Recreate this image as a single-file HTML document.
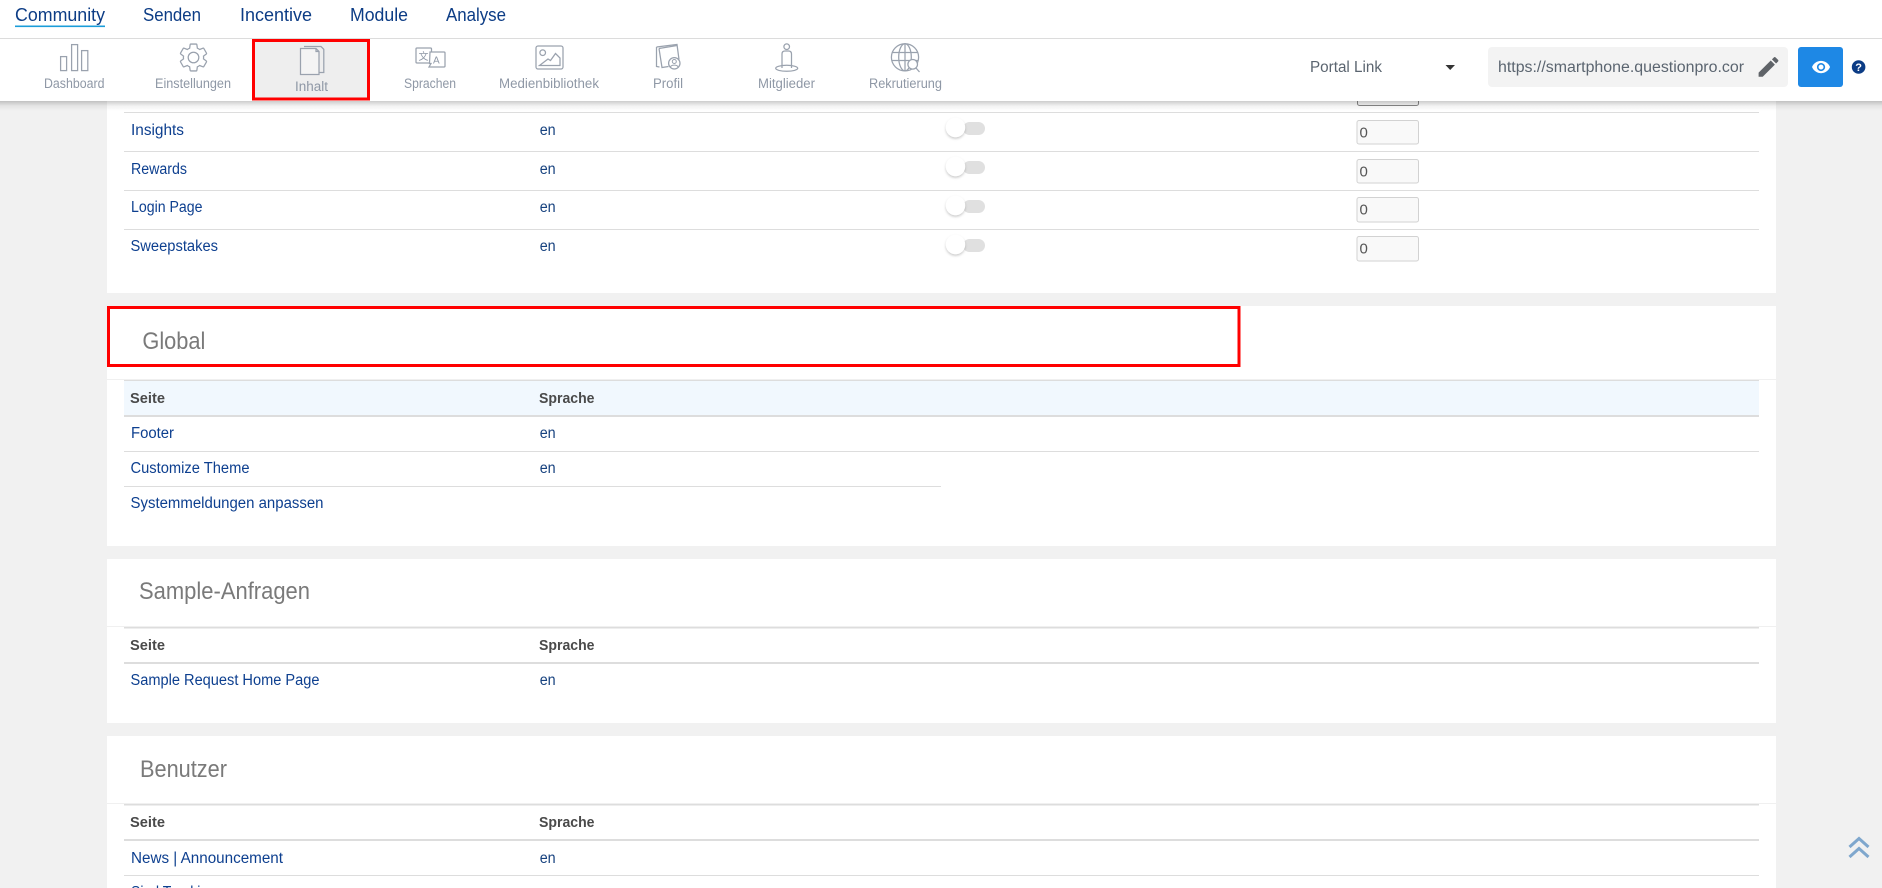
<!DOCTYPE html>
<html lang="de">
<head>
<meta charset="utf-8">
<title>Inhalt</title>
<style>
html,body{margin:0;padding:0;background:#f1f1f1;width:1882px;height:888px;overflow:hidden}
svg{display:block}
text{font-family:"Liberation Sans","Noto Sans CJK SC",sans-serif}
.nav{font-size:18.5px;fill:#0c3c85}
.tb{font-size:13.5px;fill:#8f98a6}
.lk{font-size:15.5px;fill:#0d3f8f}
.en{font-size:15.5px;fill:#17427f}
.th{font-size:15px;font-weight:bold;fill:#4a4a4a}
.h{font-size:24px;fill:#7a7a7a}
.z{font-size:15px;fill:#555}
.ic{fill:none;stroke:#9aa2ae;stroke-width:1.25}
.ln{fill:#dddddd}
</style>
</head>
<body>
<svg xmlns="http://www.w3.org/2000/svg" width="1882" height="888" viewBox="0 0 1882 888">
<defs>
<linearGradient id="sh" x1="0" y1="0" x2="0" y2="1"><stop offset="0" stop-color="#000" stop-opacity=".2"/><stop offset=".5" stop-color="#000" stop-opacity=".05"/><stop offset="1" stop-color="#000" stop-opacity="0"/></linearGradient>
<filter id="ks" x="-50%" y="-50%" width="200%" height="200%"><feDropShadow dx="0" dy="1.5" stdDeviation="1.2" flood-color="#000" flood-opacity=".22"/></filter>
<g id="sw"><rect x="963" y="0" width="22" height="13" rx="6.5" fill="#e0e0e0"/><circle cx="955.5" cy="5.5" r="9.7" fill="#fff" filter="url(#ks)"/></g>
</defs>

<rect width="1882" height="888" fill="#f1f1f1"/>

<!-- Card 1 -->
<rect x="107" y="90" width="1669" height="203" fill="#fff"/>
<rect x="1357.5" y="90.5" width="61" height="15" rx="2" fill="#f9f9f9" stroke="#888"/>
<rect class="ln" x="124" y="112" width="1635" height="1"/>
<rect class="ln" x="124" y="151" width="1635" height="1"/>
<rect class="ln" x="124" y="190" width="1635" height="1"/>
<rect class="ln" x="124" y="229" width="1635" height="1"/>

<text class="lk" x="131" y="135" textLength="53" lengthAdjust="spacingAndGlyphs">Insights</text>
<text class="lk" x="131" y="174" textLength="56" lengthAdjust="spacingAndGlyphs">Rewards</text>
<text class="lk" x="131" y="212" textLength="71.5" lengthAdjust="spacingAndGlyphs">Login Page</text>
<text class="lk" x="130.5" y="251" textLength="87.5" lengthAdjust="spacingAndGlyphs">Sweepstakes</text>
<text class="en" x="539.7" y="135" textLength="16" lengthAdjust="spacingAndGlyphs">en</text>
<text class="en" x="539.7" y="174" textLength="16" lengthAdjust="spacingAndGlyphs">en</text>
<text class="en" x="539.7" y="212" textLength="16" lengthAdjust="spacingAndGlyphs">en</text>
<text class="en" x="539.7" y="251" textLength="16" lengthAdjust="spacingAndGlyphs">en</text>

<use href="#sw" y="122"/>
<use href="#sw" y="161"/>
<use href="#sw" y="200"/>
<use href="#sw" y="239"/>

<rect x="1357" y="120.5" width="61.5" height="23.5" rx="2" fill="#f9f9f9" stroke="#d2d2d2"/>
<rect x="1357" y="159.5" width="61.5" height="23.5" rx="2" fill="#f9f9f9" stroke="#d2d2d2"/>
<rect x="1357" y="197.5" width="61.5" height="24.5" rx="2" fill="#f9f9f9" stroke="#d2d2d2"/>
<rect x="1357" y="236.5" width="61.5" height="24.5" rx="2" fill="#f9f9f9" stroke="#d2d2d2"/>
<text class="z" x="1359.5" y="137.5">0</text>
<text class="z" x="1359.5" y="176.5">0</text>
<text class="z" x="1359.5" y="214.5">0</text>
<text class="z" x="1359.5" y="253.5">0</text>

<!-- Card 2: Global -->
<rect x="107" y="306" width="1669" height="240" fill="#fff"/>
<rect x="107" y="379" width="1669" height="1" fill="#f0f0f0"/>
<rect x="124" y="381" width="1635" height="34" fill="#f1f8fe"/>
<rect class="ln" x="124" y="380" width="1635" height="1"/>
<rect class="ln" x="124" y="415" width="1635" height="2"/>
<rect class="ln" x="124" y="451" width="1635" height="1"/>
<rect class="ln" x="124" y="486" width="817" height="1"/>
<rect x="108.5" y="307.5" width="1130.5" height="58" fill="none" stroke="#f00" stroke-width="3"/>
<text class="h" x="142.4" y="349" textLength="63" lengthAdjust="spacingAndGlyphs">Global</text>
<text class="th" x="130" y="403" textLength="35" lengthAdjust="spacingAndGlyphs">Seite</text>
<text class="th" x="539" y="403" textLength="55.5" lengthAdjust="spacingAndGlyphs">Sprache</text>
<text class="lk" x="131" y="438" textLength="43" lengthAdjust="spacingAndGlyphs">Footer</text>
<text class="en" x="539.7" y="438" textLength="16" lengthAdjust="spacingAndGlyphs">en</text>
<text class="lk" x="130.5" y="473" textLength="119" lengthAdjust="spacingAndGlyphs">Customize Theme</text>
<text class="en" x="539.7" y="473" textLength="16" lengthAdjust="spacingAndGlyphs">en</text>
<text class="lk" x="130.5" y="508" textLength="193" lengthAdjust="spacingAndGlyphs">Systemmeldungen anpassen</text>

<!-- Card 3: Sample-Anfragen -->
<rect x="107" y="559" width="1669" height="164" fill="#fff"/>
<rect x="107" y="626" width="1669" height="1" fill="#f0f0f0"/>
<rect class="ln" x="124" y="627" width="1635" height="1.5"/>
<rect class="ln" x="124" y="662" width="1635" height="2"/>
<text class="h" x="139" y="599" textLength="171" lengthAdjust="spacingAndGlyphs">Sample-Anfragen</text>
<text class="th" x="130" y="650" textLength="35" lengthAdjust="spacingAndGlyphs">Seite</text>
<text class="th" x="539" y="650" textLength="55.5" lengthAdjust="spacingAndGlyphs">Sprache</text>
<text class="lk" x="130.5" y="685" textLength="189" lengthAdjust="spacingAndGlyphs">Sample Request Home Page</text>
<text class="en" x="539.7" y="685" textLength="16" lengthAdjust="spacingAndGlyphs">en</text>

<!-- Card 4: Benutzer -->
<rect x="107" y="736" width="1669" height="152" fill="#fff"/>
<rect x="107" y="803" width="1669" height="1" fill="#f0f0f0"/>
<rect class="ln" x="124" y="804" width="1635" height="1.5"/>
<rect class="ln" x="124" y="839" width="1635" height="2"/>
<rect class="ln" x="124" y="875" width="1635" height="1"/>
<text class="h" x="140" y="777" textLength="87" lengthAdjust="spacingAndGlyphs">Benutzer</text>
<text class="th" x="130" y="827" textLength="35" lengthAdjust="spacingAndGlyphs">Seite</text>
<text class="th" x="539" y="827" textLength="55.5" lengthAdjust="spacingAndGlyphs">Sprache</text>
<text class="lk" x="131" y="863" textLength="152" lengthAdjust="spacingAndGlyphs">News | Announcement</text>
<text class="en" x="539.7" y="863" textLength="16" lengthAdjust="spacingAndGlyphs">en</text>
<text class="lk" x="131" y="897" textLength="85" lengthAdjust="spacingAndGlyphs">Sind Tracking</text>

<!-- Scroll to top -->
<path d="M1849.5 847 L1859 838.5 L1868.5 847 M1849.5 857 L1859 848.5 L1868.5 857" fill="none" stroke="#7fa7cd" stroke-width="3"/>

<!-- Header shadow -->
<rect x="0" y="101" width="1882" height="10" fill="url(#sh)"/>

<!-- Header -->
<rect x="0" y="0" width="1882" height="101" fill="#fff"/>
<rect x="0" y="38" width="1882" height="1" fill="#dcdcdc"/>

<text class="nav" x="15" y="21" textLength="90" lengthAdjust="spacingAndGlyphs">Community</text>
<rect x="15" y="25.5" width="90" height="1.6" fill="#1b9dd9"/>
<text class="nav" x="143" y="21" textLength="58" lengthAdjust="spacingAndGlyphs">Senden</text>
<text class="nav" x="240" y="21" textLength="72" lengthAdjust="spacingAndGlyphs">Incentive</text>
<text class="nav" x="350" y="21" textLength="58" lengthAdjust="spacingAndGlyphs">Module</text>
<text class="nav" x="446" y="21" textLength="60" lengthAdjust="spacingAndGlyphs">Analyse</text>

<!-- Toolbar: Dashboard -->
<g class="ic">
<rect x="60.6" y="56.6" width="6" height="14"/>
<rect x="71.6" y="44.6" width="6" height="26"/>
<rect x="81.6" y="50.6" width="6.2" height="20"/>
</g>
<text class="tb" x="44" y="88" textLength="60.5" lengthAdjust="spacingAndGlyphs">Dashboard</text>

<!-- Einstellungen -->
<path class="ic" transform="translate(176.7 40.7) scale(1.4)" style="stroke-width:.9" d="M19.14,12.94c0.04-0.3,0.06-0.61,0.06-0.94c0-0.32-0.02-0.64-0.07-0.94l2.03-1.58c0.18-0.14,0.23-0.41,0.12-0.61l-1.92-3.32c-0.12-0.22-0.37-0.29-0.59-0.22l-2.39,0.96c-0.5-0.38-1.03-0.7-1.62-0.94L14.4,2.81c-0.04-0.24-0.24-0.41-0.48-0.41h-3.84c-0.24,0-0.43,0.17-0.47,0.41L9.25,5.35C8.66,5.59,8.12,5.92,7.63,6.29L5.24,5.33c-0.22-0.08-0.47,0-0.59,0.22L2.74,8.87C2.62,9.08,2.66,9.34,2.86,9.48l2.03,1.58C4.84,11.36,4.8,11.69,4.8,12s0.02,0.64,0.07,0.94l-2.03,1.58c-0.18,0.14-0.23,0.41-0.12,0.61l1.92,3.32c0.12,0.22,0.37,0.29,0.59,0.22l2.39-0.96c0.5,0.38,1.03,0.7,1.62,0.94l0.36,2.54c0.05,0.24,0.24,0.41,0.48,0.41h3.84c0.24,0,0.44-0.17,0.47-0.41l0.36-2.54c0.59-0.24,1.13-0.56,1.62-0.94l2.39,0.96c0.22,0.08,0.47,0,0.59-0.22l1.92-3.32c0.12-0.22,0.07-0.47-0.12-0.61L19.14,12.94z"/>
<circle class="ic" cx="193.5" cy="57.5" r="5.3"/>
<text class="tb" x="155" y="88" textLength="76" lengthAdjust="spacingAndGlyphs">Einstellungen</text>

<!-- Inhalt -->
<rect x="253.5" y="40.5" width="115" height="58.5" fill="#eee" stroke="#f00" stroke-width="3"/>
<path class="ic" d="M304 46.5 H321 L323.8 49.3 V72.5 H319"/>
<path class="ic" style="fill:#f4f4f4" d="M300.5 48.5 H316 L319 51.5 V74.5 H300.5 Z"/>
<path class="ic" d="M316 48.5 V51.5 H319"/>
<text class="tb" x="295" y="91" textLength="33" lengthAdjust="spacingAndGlyphs">Inhalt</text>

<!-- Sprachen -->
<rect class="ic" x="416" y="48" width="15.5" height="15" rx="1"/>
<path class="ic" style="fill:#fff" d="M430 52 H444 a1 1 0 0 1 1 1 V66 a1 1 0 0 1 -1 1 H429 L431 63.5 H429.5 Z"/>
<text x="418.5" y="60" style="font-family:'Noto Sans CJK SC',sans-serif;font-size:10px;fill:#8f98a6">文</text>
<text x="433" y="63.5" style="font-size:10px;fill:#8f98a6">A</text>
<text class="tb" x="404" y="88" textLength="52" lengthAdjust="spacingAndGlyphs">Sprachen</text>

<!-- Medienbibliothek -->
<rect class="ic" x="536" y="46" width="27" height="23" rx="2"/>
<circle class="ic" cx="542.7" cy="52.7" r="2.8"/>
<path class="ic" d="M539.5 65.5 L548 59 L550.5 60.5 L555.5 53.5 L560 58 V65.5 Z"/>
<text class="tb" x="499" y="88" textLength="100" lengthAdjust="spacingAndGlyphs">Medienbibliothek</text>

<!-- Profil -->
<path class="ic" d="M656.5 47 L656.5 66.5 L659.5 67"/>
<path class="ic" d="M656.5 47 L677 44.5 L679 59.5"/>
<path class="ic" d="M659 48.5 L662 67.5 L668.5 66.5"/>
<path class="ic" d="M659 48.5 L677 45.5"/>
<circle class="ic" cx="674.3" cy="63.3" r="5.7"/>
<circle class="ic" style="stroke-width:1" cx="674.3" cy="61.5" r="2"/>
<path class="ic" style="stroke-width:1" d="M670.5 67 C671 64.5 677.5 64.5 678 67"/>
<text class="tb" x="653" y="88" textLength="30" lengthAdjust="spacingAndGlyphs">Profil</text>

<!-- Mitglieder -->
<circle class="ic" cx="786.7" cy="46.7" r="2.8"/>
<path class="ic" d="M782 68 V54 Q782 51 785 51 H788.5 Q791.5 51 791.5 54 V68"/>
<ellipse class="ic" cx="786.7" cy="68.3" rx="11" ry="3"/>
<text class="tb" x="758" y="88" textLength="57" lengthAdjust="spacingAndGlyphs">Mitglieder</text>

<!-- Rekrutierung -->
<circle class="ic" cx="905" cy="57.3" r="13.6"/>
<ellipse class="ic" cx="905" cy="57.3" rx="6.3" ry="13.6"/>
<path class="ic" d="M905 43.7 V71 M892 52.5 H918 M891.5 60.5 H918.5"/>
<circle class="ic" style="fill:#fff" cx="912.7" cy="64.3" r="4.8"/>
<path class="ic" d="M916 68 L919.5 72"/>
<text class="tb" x="869" y="88" textLength="73" lengthAdjust="spacingAndGlyphs">Rekrutierung</text>

<!-- Portal link -->
<text x="1310" y="72" textLength="72" lengthAdjust="spacingAndGlyphs" style="font-size:15.5px;fill:#5b6570">Portal Link</text>
<path d="M1445.5 65 H1455 L1450.2 70 Z" fill="#333"/>
<rect x="1488" y="47" width="300" height="40" rx="4" fill="#f3f3f3"/>
<text x="1498" y="72" textLength="246" lengthAdjust="spacingAndGlyphs" style="font-size:15.5px;fill:#5b6570">https://smartphone.questionpro.cor</text>
<path transform="translate(1755.3 53.7) scale(1.1)" fill="#5f6368" d="M3 17.25V21h3.75L17.81 9.94l-3.75-3.75L3 17.25zM20.71 7.04c.39-.39.39-1.02 0-1.41l-2.34-2.34c-.39-.39-1.02-.39-1.41 0l-1.83 1.83 3.75 3.75 1.83-1.83z"/>
<rect x="1798" y="47" width="45" height="40" rx="3" fill="#1e88e5"/>
<path transform="translate(1811.2 57.2) scale(.82)" fill="#fff" d="M12 4.5C7 4.5 2.73 7.61 1 12c1.73 4.39 6 7.5 11 7.5s9.27-3.11 11-7.5c-1.73-4.39-6-7.5-11-7.5zM12 17c-2.76 0-5-2.24-5-5s2.24-5 5-5 5 2.24 5 5-2.24 5-5 5zm0-8c-1.66 0-3 1.34-3 3s1.34 3 3 3 3-1.34 3-3-1.34-3-3-3z"/>
<circle cx="1858.6" cy="67" r="6.8" fill="#0c3c85"/>
<text x="1858.6" y="71" text-anchor="middle" style="font-size:11px;font-weight:bold;fill:#fff">?</text>
</svg>
</body>
</html>
